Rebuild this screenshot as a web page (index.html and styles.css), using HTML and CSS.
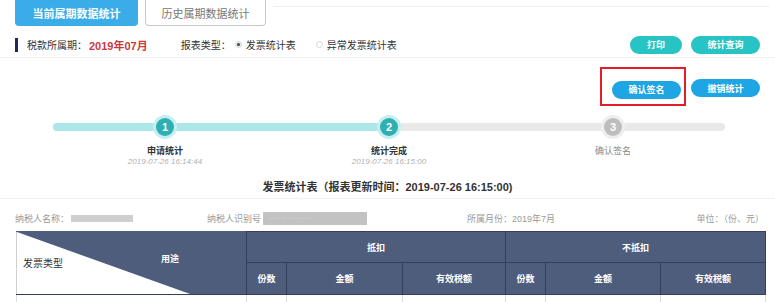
FILE: index.html
```html
<!DOCTYPE html>
<html lang="zh-CN">
<head>
    <meta charset="UTF-8">
    <title>发票统计</title>
    <link rel="stylesheet" href="styles.css">
</head>
<body>

    <div class="tabs">
        <div class="tab tab-active">当前属期数据统计</div>
        <div class="tab">历史属期数据统计</div>
        <div class="tabs-fill"></div>
    </div>

    <div class="period-row">
        <span class="mark"></span>
        <span class="label">税款所属期：</span>
        <span class="period">2019年07月</span>
        <span class="label type-label">报表类型：</span>
        <span class="radio checked"></span>
        <span class="radio-text">发票统计表</span>
        <span class="radio"></span>
        <span class="radio-text">异常发票统计表</span>
        <div class="spacer"></div>
        <button class="btn btn-teal btn-print">打印</button>
        <button class="btn btn-teal btn-wide">统计查询</button>
    </div>

    <div class="sign-row">
        <div class="highlight">
            <button class="btn btn-blue btn-wide">确认签名</button>
        </div>
        <button class="btn btn-blue btn-wide btn-cancel">撤销统计</button>
    </div>

    <div class="steps">
        <div class="track"><div class="track-fill"></div></div>
        <div class="step done">
            <div class="dot">1</div>
            <div class="step-name">申请统计</div>
            <div class="step-time">2019-07-26 16:14:44</div>
        </div>
        <div class="step done">
            <div class="dot">2</div>
            <div class="step-name">统计完成</div>
            <div class="step-time">2019-07-26 16:15:00</div>
        </div>
        <div class="step">
            <div class="dot">3</div>
            <div class="step-name">确认签名</div>
        </div>
    </div>

    <div class="report-title">发票统计表（报表更新时间：2019-07-26 16:15:00)</div>

    <div class="info-row">
        <div class="info info-name">纳税人名称：<span class="masked masked-name"></span></div>
        <div class="info info-id">纳税人识别号 <span class="masked masked-id">··· ··· ··· ··· ··· ··· ··· ·</span></div>
        <div class="info info-month">所属月份：2019年7月</div>
        <div class="info">单位：（份、元）</div>
    </div>

    <table class="stats">
        <colgroup>
            <col style="width: 230px">
            <col style="width: 40px">
            <col style="width: 116px">
            <col style="width: 103px">
            <col style="width: 40px">
            <col style="width: 115px">
            <col style="width: 105px">
        </colgroup>
        <thead>
            <tr class="head-top">
                <th rowspan="2" class="diag">
                    <span class="diag-left">发票类型</span>
                    <span class="diag-right">用途</span>
                </th>
                <th colspan="3">抵扣</th>
                <th colspan="3">不抵扣</th>
            </tr>
            <tr class="head-sub">
                <th>份数</th>
                <th>金额</th>
                <th>有效税额</th>
                <th>份数</th>
                <th>金额</th>
                <th>有效税额</th>
            </tr>
        </thead>
        <tbody>
            <tr>
                <td></td><td></td><td></td><td></td><td></td><td></td><td></td>
            </tr>
        </tbody>
    </table>

</body>
</html>
```

FILE: styles.css
```css
body {
    margin: 0;
    width: 775px;
    height: 302px;
    overflow: hidden;
    background: #fff;
    font-family: "Liberation Sans", "Noto Sans CJK SC", sans-serif;
    color: #333;
}

/* tabs */
.tabs {
    display: flex;
    padding-left: 15px;
    gap: 7px;
    height: 26px;
}

.tab {
    width: 121px;
    height: 26px;
    box-sizing: border-box;
    border: 1px solid #c8c8c8;
    border-top: none;
    border-radius: 0 0 4px 4px;
    font-size: 11px;
    color: #777;
    display: flex;
    align-items: center;
    justify-content: center;
}

.tab-active {
    width: 123px;
    background-color: #3aade9;
    border-color: #3aade9;
    color: #fff;
    font-weight: bold;
}

.tabs-fill {
    flex: 1;
    margin-top: 6px;
    margin-right: 5px;
    border-top: 1px solid #f0f0f0;
}

/* period row */
.period-row {
    display: flex;
    align-items: center;
    height: 32px;
    box-sizing: border-box;
    padding: 6px 15px 0 15px;
    border-bottom: 1px solid #f2f2f2;
    font-size: 10px;
}

.mark {
    width: 3px;
    height: 14px;
    background-color: #1f2a5a;
    margin-right: 9px;
}

.label {
    color: #333;
}

.period {
    color: #c83a3e;
    font-weight: bold;
    font-size: 11px;
    margin-left: 2px;
}

.type-label {
    margin-left: 33px;
}

.radio {
    width: 7px;
    height: 7px;
    box-sizing: border-box;
    border: 1px solid #d6d6d6;
    border-radius: 50%;
    margin: 0 4px 0 4px;
}

.radio.checked {
    border: 2px solid #e2e2e2;
    background-color: #444;
}

.radio-text {
    margin-right: 16px;
}

.spacer {
    flex: 1;
}

.btn {
    height: 18px;
    border: none;
    border-radius: 9px;
    color: #fff;
    font-family: inherit;
    font-size: 9px;
    font-weight: bold;
    padding: 0;
    cursor: pointer;
}

.btn-teal {
    background-color: #27c3c5;
}

.btn-blue {
    background-color: #1ea5e4;
}

.btn-print {
    width: 52px;
    margin-right: 9px;
}

.btn-wide {
    width: 69px;
}

/* sign row */
.sign-row {
    display: flex;
    justify-content: flex-end;
    align-items: flex-start;
    height: 52px;
    padding-right: 15px;
}

.highlight {
    margin-top: 9px;
    border: 2px solid #e21f27;
    padding: 10px 3px 5px 10px;
    margin-right: 5px;
}

.btn-cancel {
    margin-top: 21px;
}

/* steps */
.steps {
    position: relative;
    display: grid;
    grid-template-columns: repeat(3, 1fr);
    margin: 0 50px 0 53px;
    padding-top: 8px;
    height: 52px;
}

.track {
    position: absolute;
    left: 0;
    right: 0;
    top: 13px;
    height: 8px;
    border-radius: 4px;
    background-color: #e9e9e9;
    overflow: hidden;
}

.track-fill {
    width: 50%;
    height: 100%;
    background-color: #abe7e8;
}

.step {
    position: relative;
    display: flex;
    flex-direction: column;
    align-items: center;
}

.dot {
    width: 18px;
    height: 18px;
    border-radius: 50%;
    background-color: #bdbdbd;
    box-shadow: 0 0 0 3px #eeeeee;
    color: #fff;
    font-size: 11px;
    font-weight: bold;
    display: flex;
    align-items: center;
    justify-content: center;
}

.step.done .dot {
    background-color: #2fafb2;
    box-shadow: 0 0 0 3px #c6efef;
}

.step-name {
    margin-top: 9px;
    font-size: 9px;
    line-height: 12px;
    color: #888;
}

.step.done .step-name {
    color: #333;
    font-weight: bold;
}

.step-time {
    font-size: 8px;
    line-height: 10px;
    font-style: italic;
    color: #b0b0b0;
}

/* report title */
.report-title {
    margin-top: 10px;
    text-align: center;
    font-size: 11px;
    font-weight: bold;
    line-height: 14px;
    padding-bottom: 4px;
    border-bottom: 1px solid #f2f2f2;
}

.info-row {
    display: flex;
    align-items: center;
    height: 32px;
    box-sizing: border-box;
    padding: 6px 11px 0 15px;
    font-size: 9px;
    color: #9a9a9a;
}

.info {
    display: flex;
    align-items: center;
}

.info-name {
    width: 192px;
}

.info-id {
    width: 260px;
}

.info-month {
    flex: 1;
}

.masked {
    display: inline-block;
    background-color: #cfcfcf;
}

.masked-name {
    width: 62px;
    height: 7px;
    margin-left: 2px;
}

.masked-id {
    width: 104px;
    height: 13px;
    margin-left: 2px;
    background-color: #c2c2c2;
    color: #e8e8e8;
    font-size: 5px;
    line-height: 13px;
    padding-left: 6px;
    box-sizing: border-box;
    overflow: hidden;
    white-space: nowrap;
}

/* table */
.stats {
    margin-left: 16px;
    width: 749px;
    border-collapse: collapse;
    table-layout: fixed;
    font-size: 9px;
}

.stats th {
    background-color: #4e5d7c;
    color: #fff;
    font-weight: bold;
    border: 1px solid #34405a;
    padding: 0;
}

.head-top th {
    height: 30px;
}

.head-sub th {
    height: 31px;
}

.stats th.diag {
    position: relative;
    border-left: 1px solid #cfcfcf;
    border-top-color: #4e5d7c;
    text-align: left;
}

.diag::before {
    content: "";
    position: absolute;
    left: 0;
    top: 0;
    right: 0;
    bottom: 0;
    background-color: #fff;
    clip-path: polygon(0 0, 0 100%, 75.6% 100%);
}

.diag-left {
    position: absolute;
    left: 6px;
    top: 23px;
    color: #333;
    font-weight: normal;
    font-size: 10px;
}

.diag-right {
    position: absolute;
    left: 144px;
    top: 20px;
}

.stats td {
    height: 12px;
    border-left: 1px solid #dcdcdc;
    border-right: 1px solid #dcdcdc;
    border-top: 1px solid #b8b8b8;
}
```
